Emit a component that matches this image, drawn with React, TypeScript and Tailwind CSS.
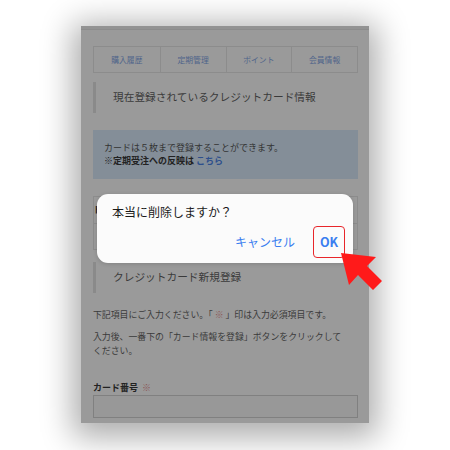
export default function App() {
  const tabs = ['購入履歴', '定期管理', 'ポイント', '会員情報'];

  return (
    <div
      className="relative w-[450px] h-[450px] bg-white flex justify-center pt-[26px]"
      style={{ fontFamily: '"Noto Sans CJK JP", "Noto Sans", sans-serif' }}
    >
      {/* dimmed phone screen */}
      <div className="relative w-[288px] h-[397px] bg-[#9a9a9a] shadow-[0_6px_30px_8px_rgba(0,0,0,0.33)] overflow-hidden">
        <div className="h-[4px] bg-[#939393] border-b border-[#8c8c8c]" />

        <div className="px-[12px] pr-[11px]">
          {/* tabs */}
          <div className="mt-[16px] grid grid-cols-4 border border-[#8c8c8c] h-[27px]">
            {tabs.map((t, i) => (
              <div
                key={t}
                className={`flex items-center justify-center text-[7.8px] text-[#4f648a] ${i > 0 ? 'border-l border-[#8c8c8c]' : ''}`}
              >
                {t}
              </div>
            ))}
          </div>

          {/* heading */}
          <div className="mt-[9px] h-[31px] border-l-[3px] border-[#8a8a8a] flex items-center pl-[17px] text-[10.7px] text-[#3a3a3a]">
            現在登録されているクレジットカード情報
          </div>

          {/* info box */}
          <div className="mt-[17px] h-[49px] bg-[#848e98] pl-[11px] pt-[11px] text-[9px] leading-[13px] text-[#333]">
            <div>カードは５枚まで登録することができます。</div>
            <div className="font-bold text-[#222]">
              ※定期受注への反映は <span className="text-[#2d4f8c]">こちら</span>
            </div>
          </div>

          {/* registered card box (behind dialog) */}
          <div className="mt-[17px] h-[54px] border border-[#8c8c8c]">
            <div className="h-[27px] border-b border-[#8c8c8c] flex items-center text-[9px] font-bold text-[#222] -ml-[1px]">
              ト
            </div>
          </div>

          {/* heading 2 */}
          <div className="mt-[12px] h-[31px] border-l-[3px] border-[#8a8a8a] flex items-center pl-[17px] text-[10.7px] text-[#3a3a3a]">
            クレジットカード新規登録
          </div>

          <div className="mt-[15px] text-[8.9px] leading-[14px] text-[#3a3a3a]">
            下記項目にご入力ください。「 <span className="text-[#8a5656]">※</span> 」印は入力必須項目です。
          </div>
          <div className="mt-[8px] text-[8.9px] leading-[14px] text-[#3a3a3a]">
            入力後、一番下の「カード情報を登録」ボタンをクリックして
            <br />
            ください。
          </div>

          <div className="mt-[23px] h-[14px] flex items-center text-[9px] font-bold text-[#222]">
            カード番号 <span className="ml-[4px] font-normal text-[#8a5656]">※</span>
          </div>
          <div className="h-[23px] border border-[#808080] bg-[#989898]" />
        </div>

        {/* confirm dialog */}
        <div className="absolute left-[16px] top-[168px] w-[256px] h-[69px] bg-[#fbfbfb] rounded-[11px] shadow-[0_1px_4px_rgba(0,0,0,0.15)]">
          <div className="pl-[15px] pt-[9px] text-[12px] leading-[18px] text-[#1a1a1a]">本当に削除しますか？</div>
          <div className="mt-[5px] flex items-center justify-end pr-[8px]">
            <span className="text-[12px] text-[#3a7ef0] mr-[18px]">キャンセル</span>
            <div className="w-[32px] h-[32px] border-[1.5px] border-[#e8262b] rounded-[4px] flex items-center justify-center text-[12.5px] font-bold text-[#3a7ef0]">
              OK
            </div>
          </div>
        </div>
      </div>

      {/* red pointer arrow */}
      <svg className="absolute left-0 top-0" width="450" height="450" viewBox="0 0 450 450">
        <polygon
          points="341,253 376,257 367,266 382,281 373,290 358,275 349,285"
          fill="#ff1a1a"
        />
      </svg>
    </div>
  );
}
